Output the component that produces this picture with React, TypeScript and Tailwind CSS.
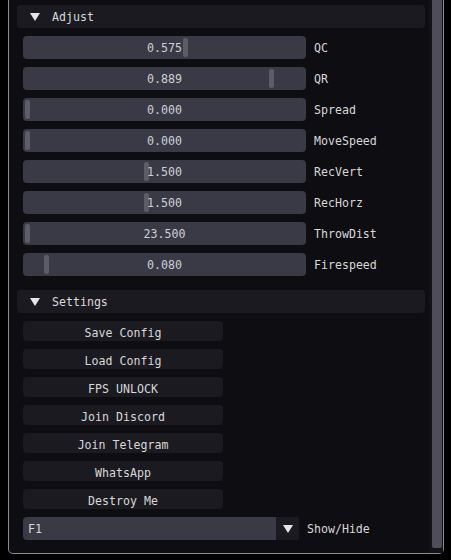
import React from "react";

const sliders: { value: string; label: string; grab: number }[] = [
  { value: "0.575", label: "QC", grab: 160 },
  { value: "0.889", label: "QR", grab: 246 },
  { value: "0.000", label: "Spread", grab: 2 },
  { value: "0.000", label: "MoveSpeed", grab: 2 },
  { value: "1.500", label: "RecVert", grab: 121 },
  { value: "1.500", label: "RecHorz", grab: 121 },
  { value: "23.500", label: "ThrowDist", grab: 2 },
  { value: "0.080", label: "Firespeed", grab: 21 },
];

const buttons = [
  "Save Config",
  "Load Config",
  "FPS UNLOCK",
  "Join Discord",
  "Join Telegram",
  "WhatsApp",
  "Destroy Me",
];

function Tri({ className }: { className?: string }) {
  return (
    <svg width="10" height="8" viewBox="0 0 10 8" className={className}>
      <polygon points="0,0 10,0 5,8" fill="#e6e6e6" />
    </svg>
  );
}

function Header({ title }: { title: string }) {
  return (
    <div className="h-[23px] w-[408px] rounded-[4px] bg-[#1b1a21] flex items-center">
      <Tri className="ml-[13px]" />
      <span className="ml-[12px] pt-[3px] text-[#d8d8d8]">{title}</span>
    </div>
  );
}

export default function App() {
  return (
    <div
      className="w-[451px] h-[560px] bg-black overflow-hidden"
      style={{ fontFamily: '"DejaVu Sans Mono", "Liberation Mono", monospace' }}
    >
      <div className="ml-[8px] w-[436px] h-[554px] border border-t-0 border-[#8b8a94] rounded-b-[5px] bg-[#0e0d12] flex text-[11.6px] leading-none">
        <div className="w-[420px] pl-[8px] pt-[5px] flex flex-col">
          <Header title="Adjust" />
          <div className="mt-[8px] pl-[6px] flex flex-col gap-[8px]">
            {sliders.map((s) => (
              <div key={s.label} className="flex items-center h-[23px]">
                <div className="relative w-[283px] h-[23px] rounded-[4px] bg-[#3a3946] flex items-center justify-center">
                  <div
                    className="absolute top-[2px] w-[5px] h-[19px] rounded-[2px] bg-[#5d5c69]"
                    style={{ left: s.grab }}
                  />
                  <span className="relative pt-[3px] text-[#d0d0d4]">{s.value}</span>
                </div>
                <span className="ml-[8px] pt-[3px] text-[#d8d8d8]">{s.label}</span>
              </div>
            ))}
          </div>
          <div className="mt-[14px]">
            <Header title="Settings" />
          </div>
          <div className="mt-[8px] pl-[6px] flex flex-col gap-[8px]">
            {buttons.map((b) => (
              <div
                key={b}
                className="w-[200px] h-[20px] rounded-[4px] bg-[#1b1a21] flex items-center justify-center pt-[5px] text-[#d8d8d8]"
              >
                {b}
              </div>
            ))}
            <div className="flex items-center h-[23px]">
              <div className="w-[276px] h-[23px] rounded-[4px] bg-[#3a3946] flex overflow-hidden">
                <div className="flex-1 flex items-center pl-[5px] pt-[3px] text-[#d8d8d8]">F1</div>
                <div className="w-[23px] h-full bg-[#1b1a21] flex items-center justify-center">
                  <Tri />
                </div>
              </div>
              <span className="ml-[8px] pt-[3px] text-[#d8d8d8]">Show/Hide</span>
            </div>
          </div>
        </div>
        <div className="w-[14px] h-full bg-[#131217] flex">
          <div className="ml-[3px] w-[10px] h-[548px] rounded-b-[2px] bg-[#4e4d59]" />
        </div>
      </div>
    </div>
  );
}
